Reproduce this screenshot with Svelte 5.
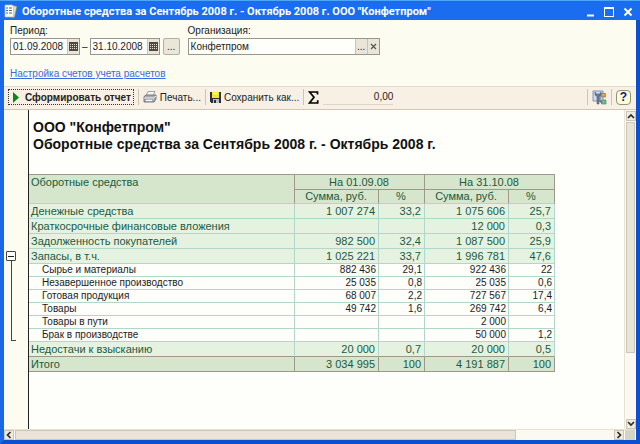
<script>
  const title = 'Оборотные средства за Сентябрь 2008 г. - Октябрь 2008 г.';
  const company = 'ООО "Конфетпром"';

  let from = $state('01.09.2008');
  let to = $state('31.10.2008');
  let organization = $state('Конфетпром');
  let open = $state(true);

  const rows = [
    { name: 'Денежные средства', cells: ['1 007 274', '33,2', '1 075 606', '25,7'], kind: 'group' },
    { name: 'Краткосрочные финансовые вложения', cells: ['', '', '12 000', '0,3'], kind: 'group' },
    { name: 'Задолженность покупателей', cells: ['982 500', '32,4', '1 087 500', '25,9'], kind: 'group' },
    { name: 'Запасы, в т.ч.', cells: ['1 025 221', '33,7', '1 996 781', '47,6'], kind: 'group' },
    { name: 'Сырье и материалы', cells: ['882 436', '29,1', '922 436', '22'], kind: 'detail' },
    { name: 'Незавершенное производство', cells: ['25 035', '0,8', '25 035', '0,6'], kind: 'detail' },
    { name: 'Готовая продукция', cells: ['68 007', '2,2', '727 567', '17,4'], kind: 'detail' },
    { name: 'Товары', cells: ['49 742', '1,6', '269 742', '6,4'], kind: 'detail' },
    { name: 'Товары в пути', cells: ['', '', '2 000', ''], kind: 'detail' },
    { name: 'Брак в производстве', cells: ['', '', '50 000', '1,2'], kind: 'detail' },
    { name: 'Недостачи к взысканию', cells: ['20 000', '0,7', '20 000', '0,5'], kind: 'group last' },
    { name: 'Итого', cells: ['3 034 995', '100', '4 191 887', '100'], kind: 'total' }
  ];
  const shown = $derived(rows.filter((r) => open || r.kind !== 'detail'));
</script>

{#snippet calendar()}
  <svg width="9" height="9" viewBox="0 0 9 9" shape-rendering="crispEdges" aria-hidden="true">
    <path fill="#4c4a42" d="M0 0h9v9H0z" />
    <path fill="#e6e1d2" d="M1 2h1v1H1zM3 2h1v1H3zM5 2h1v1H5zM7 2h1v1H7zM1 4h1v1H1zM3 4h1v1H3zM5 4h1v1H5zM7 4h1v1H7zM1 6h1v1H1zM3 6h1v1H3zM5 6h1v1H5zM7 6h1v1H7z" />
  </svg>
{/snippet}

{#snippet chevron(d)}
  <svg width="8" height="8" viewBox="0 0 8 8" aria-hidden="true">
    <path {d} fill="none" stroke="#2c2c2c" stroke-width="1.7" />
  </svg>
{/snippet}

<div class="window">
  <header class="titlebar">
    <svg width="14" height="15" viewBox="0 0 14 15" aria-hidden="true">
      <path d="M8 1l5 1.500-2.500 11-4-1z" fill="#d9dccf" stroke="#77827f" stroke-width=".7" />
      <path d="M1 1h7l1.500 1.500V13H1z" fill="#fbfbf2" stroke="#b9c0be" stroke-width=".7" />
      <path d="M2 4h2M5 4h3M2 6.500h2M5 6.500h3M2 9h2M5 9h3" stroke="#4a6590" stroke-width="1.200" />
    </svg>
    <h1>{title} {company}</h1>
    <div class="winbuttons">
      <button aria-label="Свернуть"><svg width="9" height="10"><path d="M1 8.500h7" stroke="#fff" stroke-width="2" /></svg></button>
      <button aria-label="Развернуть"><svg width="10" height="10" shape-rendering="crispEdges"><path d="M.5 1v8.500h9V1" fill="none" stroke="#fff" /><path d="M0 1h10" stroke="#fff" stroke-width="2" /></svg></button>
      <button aria-label="Закрыть"><svg width="10" height="10"><path d="M1.500 1.500l7 7M8.500 1.500l-7 7" stroke="#fff" stroke-width="2" /></svg></button>
    </div>
  </header>

  <section class="params">
    <div class="fields">
      <div class="field">
        <label for="from">Период:</label>
        <div class="line">
          <span class="box date"><input id="from" bind:value={from} /><button aria-label="Календарь">{@render calendar()}</button></span>
          <span>–</span>
          <span class="box date"><input aria-label="Конец периода" bind:value={to} /><button aria-label="Календарь">{@render calendar()}</button></span>
          <button class="more">...</button>
        </div>
      </div>
      <div class="field">
        <label for="org">Организация:</label>
        <span class="box org">
          <input id="org" bind:value={organization} />
          <button>...</button>
          <button aria-label="Очистить"><svg width="7" height="7"><path d="M1 1l5 5M6 1L1 6" stroke="#555" stroke-width="1.200" /></svg></button>
        </span>
      </div>
    </div>
    <a href="#accounts">Настройка счетов учета расчетов</a>
  </section>

  <div class="toolbar">
    <button class="run">
      <svg width="6" height="11"><path d="M0 0l6 5.500L0 11z" fill="#0a8a12" /></svg>
      Сформировать отчет
    </button>
    <i class="sep"></i>
    <button>
      <svg width="14" height="12" viewBox="0 0 14 12" aria-hidden="true">
        <path d="M5 .5h7L10 5H3z" fill="#f4f4f0" stroke="#8c8f92" stroke-width=".8" />
        <path d="M1 5.500L3 4h10v4l-2 3H1z" fill="#a9adb2" stroke="#5d6268" stroke-width=".8" />
        <path d="M1 7h10l2-2" fill="none" stroke="#e8eaec" />
        <path d="M3 9.500h6" stroke="#fff" stroke-width="1.200" />
      </svg>
      Печать...
    </button>
    <i class="sep"></i>
    <button>
      <svg width="11" height="11" viewBox="0 0 11 11" shape-rendering="crispEdges" aria-hidden="true">
        <path d="M0 0h11v11H1L0 10z" fill="#2c2e38" />
        <path d="M2 0h7v6H2z" fill="#f3e63a" />
        <path d="M3 1h5v1H3z" fill="#fffbb0" />
        <path d="M3 7h6v4H3z" fill="#b9c0c8" />
        <path d="M4 8h2v3H4z" fill="#2c2e38" />
      </svg>
      Сохранить как...
    </button>
    <i class="sep"></i>
    <svg class="sigma" width="11" height="13" viewBox="0 0 11 13" aria-hidden="true">
      <path d="M9.500 3.500V1H1.500l4.500 5.300L1.500 12h8.200V9.300" fill="none" stroke="#000" stroke-width="1.700" />
    </svg>
    <output>0,00</output>
    <span class="grow"></span>
    <i class="sep"></i>
    <button class="icon" aria-label="Настройки">
      <svg width="15" height="15" viewBox="0 0 15 15" aria-hidden="true">
        <path d="M1 1h10v10H1z" fill="#cfdcec" stroke="#7e93b3" />
        <path d="M3 2v3l2 1.500V14h2V6.500L9 5V2L7.500 4h-3z" fill="#6a7c98" stroke="#44546f" stroke-width=".5" />
        <path d="M9.500 3.500h4v3.500h-4z" fill="#e3a546" stroke="#7b6640" stroke-width=".6" />
        <path d="M9.500 10h4.500v4H9.500z" fill="#6cbf8c" stroke="#3f7c5a" stroke-width=".6" />
        <path d="M8 5v7h2" fill="none" stroke="#4e5d77" />
      </svg>
    </button>
    <i class="sep"></i>
    <button class="help">?</button>
  </div>

  <main class="sheet">
    <div class="gutter">
      <button class="toggle" aria-label="Группа" aria-expanded={open} onclick={() => (open = !open)}></button>
      {#if open}<div class="bracket"></div>{/if}
    </div>
    <div class="report">
      <h2>{company}<br />{title}</h2>
      <table>
        <colgroup><col class="name" /><col class="sum" /><col class="pct" /><col class="sum" /><col class="pct" /></colgroup>
        <thead>
          <tr><th rowspan="2" class="first">Оборотные средства</th><th colspan="2">На 01.09.08</th><th colspan="2">На 31.10.08</th></tr>
          <tr class="sub"><th>Сумма, руб.</th><th>%</th><th>Сумма, руб.</th><th>%</th></tr>
        </thead>
        <tbody>
          {#each shown as row}
            <tr class={row.kind}>
              <td>{row.name}</td>
              {#each row.cells as cell}<td class="num">{cell}</td>{/each}
            </tr>
          {/each}
        </tbody>
      </table>
    </div>
    <div class="vscroll">
      <button aria-label="Вверх">{@render chevron('M1 6l3-3 3 3')}</button>
      <div class="thumb"></div>
      <div class="rest"></div>
      <button aria-label="Вниз">{@render chevron('M1 2l3 3 3-3')}</button>
    </div>
  </main>

  <div class="hscroll">
    <button aria-label="Влево">{@render chevron('M5.500 1l-3 3 3 3')}</button>
    <div class="thumb"></div>
    <div class="rest"></div>
    <button aria-label="Вправо">{@render chevron('M2.500 1l3 3-3 3')}</button>
    <div class="corner"></div>
  </div>
</div>

<style>
  :global(body) { margin: 0; }
  * { box-sizing: border-box; }
  svg { display: block; flex: none; }
  button {
    display: flex;
    align-items: center;
    justify-content: center;
    margin: 0;
    padding: 0;
    border: 0;
    background: none;
    color: inherit;
    font: inherit;
  }
  .window {
    display: flex;
    flex-direction: column;
    min-height: 100vh;
    border: 4px solid #1a68e6;
    border-top: 0;
    border-right-color: #0c50d2;
    border-bottom-color: #0c50d2;
    background: #fcfcf1;
    color: #222;
    font: 10px/13px "Liberation Sans", Arial, sans-serif;
  }
  .titlebar {
    display: flex;
    align-items: center;
    gap: 4px;
    height: 20px;
    margin: 0 -4px;
    padding: 2px 7px 0 4px;
    border-top: 1px solid #4ea6fa;
    background: #1b6def;
    color: #fff;
  }
  h1 {
    flex: 1;
    margin: 0;
    font-family: Roboto, sans-serif;
    font-size: 11px;
    line-height: 15px;
    white-space: nowrap;
  }
  .winbuttons { display: flex; gap: 9px; }
  .params { padding: 4px 6px; height: 66px; }
  .fields { display: flex; gap: 8px; }
  .field { display: flex; flex-direction: column; gap: 1px; }
  .line { display: flex; align-items: center; gap: 2px; }
  .box {
    display: flex;
    height: 17px;
    border: 1px solid #9a978a;
    background: #fefefa;
  }
  .box input {
    flex: 1;
    min-width: 0;
    padding: 0 2px;
    border: 0;
    outline: 0;
    background: none;
    color: #222;
    font: inherit;
  }
  .box button {
    width: 12px;
    border-left: 1px solid #c9c4b4;
    background: #e9e5d8;
  }
  .date { width: 70px; }
  .more {
    width: 17px;
    height: 17px;
    margin-left: 1px;
    border: 1px solid #b5b09c;
    border-radius: 2px;
    background: #ebe7d8;
  }
  .org { width: 192px; }
  a {
    display: inline-block;
    margin-top: 12px;
    color: #3b69e0;
  }
  .toolbar {
    display: flex;
    align-items: center;
    gap: 4px;
    height: 24px;
    padding: 0 5px 2px 4px;
    border-top: 1px solid #e3dccc;
    border-bottom: 1px solid #cfc8b8;
    background: #f8f0e5;
    white-space: nowrap;
  }
  .toolbar button { gap: 3px; }
  .toolbar .run {
    gap: 6px;
    height: 16px;
    padding: 0 2px 0 4px;
    border: 1px dotted #333;
    font-weight: bold;
  }
  .sep {
    width: 1px;
    height: 16px;
    background: #cdc6b6;
  }
  output {
    width: 70px;
    height: 16px;
    border-bottom: 1px solid #ddd5c6;
    line-height: 16px;
    text-align: right;
  }
  .grow { flex: 1; }
  .toolbar .help {
    width: 15px;
    height: 15px;
    border: 1px solid #8f9377;
    border-radius: 4px;
    background: #fbfbd8;
    color: #12128c;
    font-size: 12px;
    font-weight: bold;
  }
  .sheet {
    display: flex;
    flex: 1;
    background: #fefefb;
  }
  .gutter {
    width: 25px;
    padding: 141px 0 0 2px;
    border-right: 1px solid #222;
    background: #fcfcf1;
  }
  .toggle {
    width: 10px;
    height: 10px;
    border: 1px solid #444;
    border-radius: 1px;
    background: linear-gradient(#222, #222) center / 6px 1px no-repeat #fdfdf8;
  }
  .bracket {
    width: 5px;
    height: 80px;
    margin-left: 5px;
    border: solid #444;
    border-width: 0 0 1px 1px;
  }
  .report { flex: 1; min-width: 0; }
  h2 {
    margin: 9px 4px 21px;
    color: #111;
    font-size: 14px;
    line-height: 17px;
    white-space: nowrap;
  }
  table {
    width: 526px;
    border-spacing: 0;
    border-top: 1px solid #9d988a;
    table-layout: fixed;
    color: #1b5a42;
    font-size: 11px;
    line-height: 13px;
    white-space: nowrap;
  }
  .name { width: 266px; }
  .sum { width: 84px; }
  .pct { width: 46px; }
  tr { height: 15px; }
  .sub { height: 14px; }
  th, td {
    padding: 0 3px 0 2px;
    border: solid #b3d6cb;
    border-width: 0 1px 1px 0;
    font-weight: normal;
    text-align: left;
  }
  th {
    border-color: #9d988a;
    background: #d5e6cc;
    text-align: center;
  }
  th.first { padding-top: 1px; text-align: left; vertical-align: top; }
  .sub th, th.first { border-bottom-color: #b3d6cb; }
  .group td { background: #e5f2df; }
  td.num { text-align: right; }
  .detail { height: 13px; color: #1c1c1c; font-size: 10px; line-height: 12px; }
  .detail td { padding-right: 2px; }
  .detail td:first-child { padding-left: 13px; }
  .last td { border-bottom-color: #9d988a; }
  .total td { border-color: #9d988a; background: #d5e6cc; }
  .vscroll {
    display: flex;
    flex-direction: column;
    gap: 1px;
    width: 12px;
    padding: 1px 1px 0;
    border-left: 1px solid #e8e2d4;
    background: #fbf9f2;
  }
  .vscroll button, .hscroll button {
    flex: none;
    width: 10px;
    height: 10px;
    border: 1px solid #cbc5b4;
    background: #efebdf;
  }
  .thumb { border: 1px solid #cdc7b8; background: #e9e4d7; }
  .vscroll .thumb { flex: 232; }
  .vscroll .rest { flex: 65; }
  .hscroll {
    display: flex;
    gap: 1px;
    height: 11px;
    padding-right: 1px;
    border-top: 1px solid #e8e2d4;
    background: #fbf9f2;
  }
  .hscroll .thumb { flex: 502; }
  .hscroll .rest { flex: 97; }
  .corner { width: 10px; background: #d5d2c6; }
</style>
